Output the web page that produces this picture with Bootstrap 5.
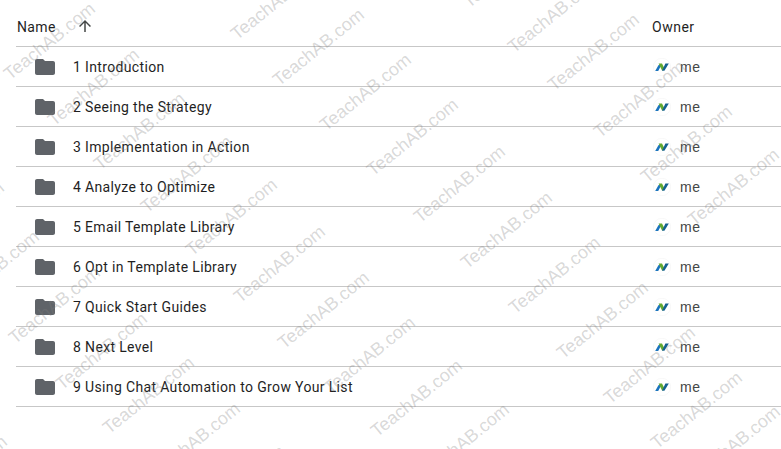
<!DOCTYPE html>
<html lang="en">
  <head>
    <meta charset="UTF-8" />
    <title>Drive folder</title>
    <link
      href="https://cdn.jsdelivr.net/npm/bootstrap@5.3.0/dist/css/bootstrap.min.css"
      rel="stylesheet"
    />
    <style>
      html,
      body {
        height: 449px;
        overflow: hidden;
      }
      body {
        font-family: Roboto, "Liberation Sans", sans-serif;
        font-size: 14px;
        color: #1f1f1f;
        background: #fff;
      }
      .drive-list {
        margin-left: 16px;
      }
      .drive-row {
        height: 40px;
        padding-top: 1px;
        border-bottom: 1px solid #c7c7c7;
      }
      .drive-head {
        height: 47px;
        padding-top: 9px;
      }
      .name-col {
        letter-spacing: 0.35px;
      }
      .head-name {
        margin-left: 1px;
      }
      .sort-arrow {
        margin-left: 20px;
        margin-top: -3px;
        fill: #444746;
      }
      .folder-icon {
        margin-left: 17px;
        margin-right: 16px;
        fill: #5f6368;
      }
      .owner-col {
        width: 129px;
        letter-spacing: 0.5px;
      }
      .owner-me {
        color: #444746;
        font-family: "Liberation Sans", sans-serif;
      }
      .owner-logo {
        margin-left: 1px;
        margin-right: 9px;
      }
      .wm-layer {
        position: absolute;
        inset: 0;
        overflow: hidden;
        pointer-events: none;
      }
      .wm-text {
        position: absolute;
        font-family: "Liberation Sans", sans-serif;
        font-size: 18px;
        line-height: 1;
        white-space: nowrap;
        color: rgba(125, 125, 125, 0.3);
        transform-origin: 0 100%;
        transform: rotate(-39deg);
      }
    </style>
  </head>
  <body class="position-relative">
    <div class="drive-list" id="driveList">
      <div class="drive-row drive-head d-flex align-items-center">
        <div class="name-col flex-grow-1 d-flex align-items-center">
          <span class="head-name">Name</span>
          <svg class="sort-arrow" width="18" height="18" viewBox="0 0 24 24">
            <path d="M4 12l1.41 1.41L11 7.83V20h2V7.83l5.58 5.59L20 12l-8-8-8 8z" />
          </svg>
        </div>
        <div class="owner-col">Owner</div>
      </div>
    </div>
    <div class="wm-layer" id="wmLayer"></div>

    <script>
      const folders = [
        "1 Introduction",
        "2 Seeing the Strategy",
        "3 Implementation in Action",
        "4 Analyze to Optimize",
        "5 Email Template Library",
        "6 Opt in Template Library",
        "7 Quick Start Guides",
        "8 Next Level",
        "9 Using Chat Automation to Grow Your List",
      ];

      const driveList = document.getElementById("driveList");
      folders.forEach((name) => {
        const row = document.createElement("div");
        row.className = "drive-row d-flex align-items-center";
        row.innerHTML = `
          <div class="name-col flex-grow-1 d-flex align-items-center">
            <svg class="folder-icon" width="24" height="24" viewBox="0 0 24 24">
              <path d="M10 4H4c-1.1 0-2 .9-2 2v12c0 1.1.9 2 2 2h16c1.1 0 2-.9 2-2V8c0-1.1-.9-2-2-2h-8l-2-2z" />
            </svg>
            <span>${name}</span>
          </div>
          <div class="owner-col d-flex align-items-center">
            <svg class="owner-logo" width="18" height="18" viewBox="0 0 18 18">
              <circle cx="9" cy="9" r="8.7" fill="#fff" stroke="#f4f4f4" stroke-width="0.6" />
              <path d="M2.2 13 L5.6 7 L8.4 7 L5.2 13 Z" fill="#1b74bd" />
              <path d="M5.6 5.6 L9 5.6 L11.6 10.8 L9.2 12.8 Z" fill="#62a82f" />
              <path d="M9 12.8 L12.4 5.4 L15.8 5.4 L11.4 12.8 Z" fill="#14608f" />
            </svg>
            <span class="owner-me">me</span>
          </div>`;
        driveList.appendChild(row);
      });

      // bottom-left corner of each rotated watermark, read off the picture
      const marks = [
        [230, 37], [272, 83], [319, 128], [366, 173], [413, 220], [460, 266],
        [508, 311], [556, 356], [603, 401], [650, 446],
        [3, 77], [47, 123], [93, 167], [140, 210], [185, 253], [233, 300],
        [277, 346], [323, 391], [370, 434], [417, 478], [460, 522],
        [462, 5], [507, 50], [547, 88], [593, 135], [640, 180], [687, 223],
        [8, 341], [55, 387], [102, 431], [148, 477], [193, 520],
        [-88, 256], [-53, 305], [-85, 510], [688, 480],
      ];
      const wmLayer = document.getElementById("wmLayer");
      marks.forEach(([x, y]) => {
        const mark = document.createElement("span");
        mark.className = "wm-text";
        mark.textContent = "TeachAB.com";
        mark.style.left = `${x + 9}px`;
        mark.style.top = `${y - 12}px`;
        wmLayer.appendChild(mark);
      });
    </script>
    <script src="https://cdn.jsdelivr.net/npm/bootstrap@5.3.0/dist/js/bootstrap.bundle.min.js"></script>
  </body>
</html>
